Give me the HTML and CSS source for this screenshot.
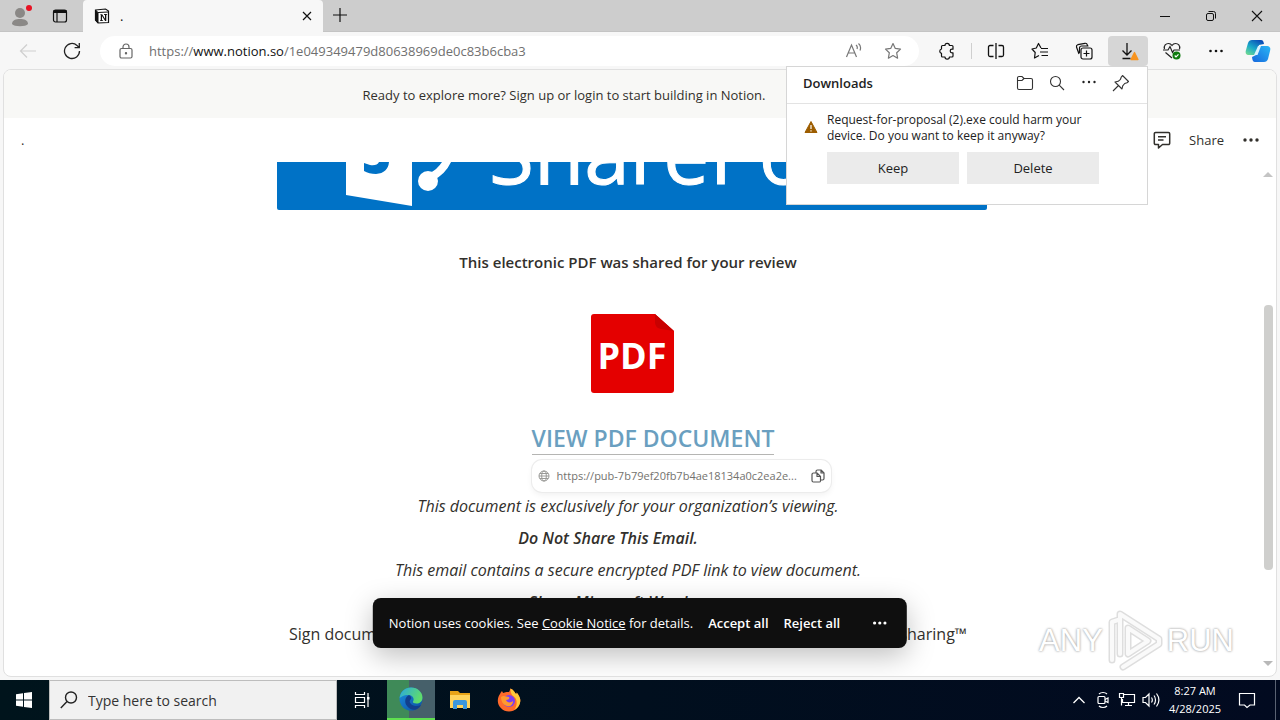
FILE: index.html
```html
<!DOCTYPE html>
<html lang="en">
<head>
    <meta charset="UTF-8">
    <meta name="viewport" content="width=device-width, initial-scale=1.0">
    <title>.</title>
    <link rel="stylesheet" href="styles.css">
</head>
<body>
    <!-- Tab strip -->
    <header class="tabstrip">
        <div class="tab-tools">
            <button class="tool" aria-label="Profile">
                <svg width="24" height="24" viewBox="0 0 24 24"><circle cx="12" cy="9" r="5" fill="#8a8886"/><path d="M4 20c0-4 4-5 8-5s8 1 8 5c-2 3-14 3-16 0z" fill="#8a8886"/><circle cx="21" cy="4" r="3" fill="#e81123"/></svg>
            </button>
            <button class="tool" aria-label="Workspaces">
                <svg width="16" height="16" viewBox="0 0 16 16" fill="none" stroke="#111" stroke-width="1.200"><rect x="1.500" y="2" width="13" height="12" rx="2"/><path d="M1.500 3.500h13" stroke-width="3"/><path d="M5 4v10"/></svg>
            </button>
        </div>
        <div class="tab">
            <svg width="16" height="16" viewBox="0 0 16 16"><path d="M1.500 2l10-1 3 2v11.500L4 15l-2.500-3z" fill="#fff" stroke="#111" stroke-width="1.200"/><path d="M1.500 2L4 4.500V15l-2.500-3zM4 4.500L14.500 4" fill="#111" stroke="#111"/><path d="M6 6.300h2.200l2.800 4.400V7l-1-.3V6h3.200v.6l-.9.300v6h-1.200L8 8v4l1.100.4v.6H6v-.6l.8-.4V7z" fill="#111"/></svg>
            <span class="tab-title">.</span>
            <button class="tool tool-small" aria-label="Close tab">
                <svg width="12" height="12" viewBox="0 0 12 12" stroke="#111" stroke-width="1.200"><path d="M2 2l8 8M10 2l-8 8"/></svg>
            </button>
        </div>
        <button class="tool" aria-label="New tab">
            <svg width="14" height="14" viewBox="0 0 14 14" stroke="#111" stroke-width="1.200"><path d="M7 0v14M0 7h14"/></svg>
        </button>
        <div class="window-controls">
            <button aria-label="Minimize"><svg width="12" height="12" viewBox="0 0 12 12" stroke="#111"><path d="M1 6.500h10"/></svg></button>
            <button aria-label="Restore"><svg width="12" height="12" viewBox="0 0 12 12" fill="none" stroke="#111"><rect x="1.500" y="3.500" width="7" height="7" rx="1.500"/><path d="M3.500 1.500h5a2 2 0 0 1 2 2v5"/></svg></button>
            <button aria-label="Close"><svg width="12" height="12" viewBox="0 0 12 12" stroke="#111" stroke-width="1.100"><path d="M1 1l10 10M11 1L1 11"/></svg></button>
        </div>
    </header>

    <!-- Address bar -->
    <nav class="toolbar">
        <button class="tool" aria-label="Back" disabled>
            <svg width="18" height="18" viewBox="0 0 18 18" fill="none" stroke="#cfcfcf" stroke-width="1.200"><path d="M17 9H1.500M8 2.500L1.500 9 8 15.500"/></svg>
        </button>
        <button class="tool" aria-label="Refresh">
            <svg width="18" height="18" viewBox="0 0 18 18" fill="none" stroke="#222" stroke-width="1.300"><path d="M16.500 9A7.500 7.500 0 1 1 14 3.400L16 5.500M16.300 1v4.700h-4.700"/></svg>
        </button>
        <div class="address">
            <svg width="16" height="16" viewBox="0 0 16 16" fill="none" stroke="#666" stroke-width="1.200"><rect x="2" y="5.500" width="12" height="9.500" rx="1.500"/><path d="M5 5.500V4a3 3 0 0 1 6 0v1.500"/><circle cx="8" cy="10.200" r=".6" fill="#666"/></svg>
            <div class="url" role="textbox" contenteditable="true" spellcheck="false" aria-label="Address">https://<span class="url-host">www.notion.so</span>/1e049349479d80638969de0c83b6cba3</div>
            <button class="tool" aria-label="Read aloud">
                <svg width="18" height="18" viewBox="0 0 18 18" fill="none" stroke="#777" stroke-width="1.200"><path d="M2.500 15L7.500 3l5 12M4.200 11h6.600M12 3c1.300 1 1.600 2.500 1 4M14.500 1.500c2.300 2 2.500 4.500 1.500 7"/></svg>
            </button>
            <button class="tool" aria-label="Add to favorites">
                <svg width="18" height="18" viewBox="0 0 18 18" fill="none" stroke="#777" stroke-width="1.200" stroke-linejoin="round"><path d="M9 1.500l2.300 4.900 5.200.7-3.800 3.700.9 5.400L9 13.600l-4.600 2.600.9-5.400L1.500 7.100l5.200-.7z"/></svg>
            </button>
        </div>
        <div class="toolbar-actions">
            <button class="tool" aria-label="Extensions">
                <svg width="18" height="18" viewBox="0 0 18 18" fill="none" stroke="#111" stroke-width="1.200" stroke-linejoin="round"><path d="M4.500 3.500H7a2.200 2.200 0 0 1 4.400 0H14a1 1 0 0 1 1 1v2.700h-1a1.800 1.800 0 0 0 0 3.600h1V14a1 1 0 0 1-1 1h-2.600a2.200 2.200 0 0 1-4.400 0H4.500a1 1 0 0 1-1-1v-2.700a2.200 2.200 0 0 1 0-4.300V4.500a1 1 0 0 1 1-1z"/></svg>
            </button>
            <span class="divider"></span>
            <button class="tool" aria-label="Split screen">
                <svg width="18" height="18" viewBox="0 0 18 18" fill="none" stroke="#111" stroke-width="1.300"><path d="M6.500 3.500H3A1.500 1.500 0 0 0 1.500 5v8A1.500 1.500 0 0 0 3 14.500h3.500M11.500 3.500H15A1.500 1.500 0 0 1 16.500 5v8a1.500 1.500 0 0 1-1.500 1.500h-3.500M9 1v16"/></svg>
            </button>
            <button class="tool" aria-label="Favorites">
                <svg width="18" height="18" viewBox="0 0 18 18" fill="none" stroke="#111" stroke-width="1.200" stroke-linejoin="round"><path d="M10 6L7.500 1.500 5.300 6 1 7l3.200 3.500L3.500 16l4.500-2.500M10 6.500h7M9 10h8M10.500 13.500H17"/></svg>
            </button>
            <button class="tool" aria-label="Collections">
                <svg width="18" height="18" viewBox="0 0 18 18" fill="none" stroke="#111" stroke-width="1.200"><rect x="6" y="6" width="11" height="11" rx="2"/><path d="M11.500 8.500v6M8.500 11.500h6M4 12L1.500 5a2 2 0 0 1 1.300-2.300L10 1.300c1.200-.2 2 .3 2.300 1.500L12.500 4M4.500 11V6a2 2 0 0 1 2-2h7"/></svg>
            </button>
            <div class="download-anchor">
                <button class="tool tool-active" aria-label="Downloads">
                    <svg width="24" height="20" viewBox="0 0 24 20" fill="none" stroke="#111" stroke-width="1.300"><path d="M11 2v11.500M6.500 9.500L11 14l4.500-4.500M6.500 17.500h8"/><path d="M18.500 11.500l3.500 7h-7z" fill="#f7931e" stroke="#f7931e" stroke-linejoin="round"/></svg>
                </button>
                <section class="downloads">
                    <div class="downloads-header">
                        <h2>Downloads</h2>
                        <button aria-label="Open downloads folder"><svg width="18" height="16" viewBox="0 0 18 16" fill="none" stroke="#333" stroke-width="1.100"><path d="M1.500 3A1.500 1.500 0 0 1 3 1.500h3L8 3.500h7A1.500 1.500 0 0 1 16.500 5v8a1.500 1.500 0 0 1-1.500 1.500H3A1.500 1.500 0 0 1 1.500 13zM1.500 5.500H6L8 3.500"/></svg></button>
                        <button aria-label="Search downloads"><svg width="16" height="16" viewBox="0 0 16 16" fill="none" stroke="#333" stroke-width="1.100"><circle cx="6.500" cy="6.500" r="5"/><path d="M10.200 10.200L15 15"/></svg></button>
                        <button aria-label="More options"><svg width="16" height="16" viewBox="0 0 16 16" fill="#222"><circle cx="2.500" cy="7" r="1.200"/><circle cx="8" cy="7" r="1.200"/><circle cx="13.500" cy="7" r="1.200"/></svg></button>
                        <button aria-label="Pin downloads"><svg width="18" height="18" viewBox="0 0 18 18" fill="none" stroke="#333" stroke-width="1.100" stroke-linejoin="round"><path d="M10.500 1.500l6 6-1.500 1.200-2.300.8-2 2.300-.7 3.200L3 8l3.200-.7 2.300-2 .8-2.300zM6.500 11.500L1 17"/></svg></button>
                    </div>
                    <div class="download-item">
                        <svg width="14" height="14" viewBox="0 0 14 14"><path d="M7 1.500l6 11H1z" fill="#9d5d00" stroke="#9d5d00" stroke-linejoin="round"/><path d="M7 5v4M7 10.200v1.300" stroke="#fff" stroke-width="1.200"/></svg>
                        <div>
                            <p>Request-for-proposal (2).exe could harm your device. Do you want to keep it anyway?</p>
                            <div class="download-buttons">
                                <button>Keep</button>
                                <button>Delete</button>
                            </div>
                        </div>
                    </div>
                </section>
            </div>
            <button class="tool" aria-label="Browser essentials">
                <svg width="20" height="20" viewBox="0 0 20 20" fill="none" stroke="#222" stroke-width="1.200"><path d="M2.500 8C1.500 4.500 4 2.500 6.500 2.500c1.500 0 2.700.8 3.500 2 .8-1.200 2-2 3.500-2 2.500 0 5 2 4 5.500M1 9h5l2-3.500 2.500 6L12 9h6M3.500 11.500L10 17"/><circle cx="14.500" cy="14.500" r="4" fill="#107c10" stroke="none"/><path d="M12.700 14.500l1.300 1.300 2.500-2.500" stroke="#fff"/></svg>
            </button>
            <button class="tool" aria-label="Settings and more">
                <svg width="16" height="16" viewBox="0 0 16 16" fill="#111"><circle cx="2.500" cy="8" r="1.300"/><circle cx="8" cy="8" r="1.300"/><circle cx="13.500" cy="8" r="1.300"/></svg>
            </button>
            <button class="tool tool-copilot" aria-label="Copilot">
                <svg width="26" height="24" viewBox="0 0 26 24">
                    <defs>
                        <linearGradient id="copilot-a" x1="0" y1="1" x2=".7" y2="0"><stop offset="0" stop-color="#7be08a"/><stop offset=".5" stop-color="#1aa9c9"/><stop offset="1" stop-color="#0b4fb8"/></linearGradient>
                        <linearGradient id="copilot-b" x1="0" y1="1" x2="1" y2="0"><stop offset="0" stop-color="#1667dd"/><stop offset="1" stop-color="#2ab7f5"/></linearGradient>
                    </defs>
                    <path d="M7 1h9c2 0 2.500 1.500 3 4l-5 1c-1 3-2 7-4 10H4c-3 0-4-2-3-5l2-7c.7-2 2-3 4-3z" fill="url(#copilot-a)"/>
                    <path d="M19 23h-9c-2 0-2.600-1.500-3-5l4-2c1.500-2 2-6 4-9h6c4 0 5 2 4 5l-2 8c-.7 2-2 3-4 3z" fill="url(#copilot-b)"/>
                    <path d="M13 7h3l-3.500 9H9z" fill="#d9f4ff"/>
                </svg>
            </button>
        </div>
    </nav>

    <!-- Notion page -->
    <main class="page">
        <div class="signup-banner">Ready to explore more? Sign up or login to start building in Notion.</div>
        <div class="topbar">
            <span class="breadcrumb">.</span>
            <button aria-label="Comments"><svg width="18" height="18" viewBox="0 0 18 18" fill="none" stroke="#32302c" stroke-width="1.500" stroke-linejoin="round"><path d="M2.500 1.500h13a1.200 1.200 0 0 1 1.200 1.200v9.600a1.200 1.200 0 0 1-1.200 1.200H9.500L5.500 17v-3.500h-3a1.200 1.200 0 0 1-1.200-1.200V2.700a1.200 1.200 0 0 1 1.200-1.200zM5 5.700h8M5 9h5.500"/></svg></button>
            <button>Share</button>
            <button aria-label="Page options"><svg width="18" height="18" viewBox="0 0 18 18" fill="#32302c"><circle cx="3" cy="9" r="1.700"/><circle cx="9" cy="9" r="1.700"/><circle cx="15" cy="9" r="1.700"/></svg></button>
        </div>
        <div class="scroller">
            <article class="doc">
                <svg class="sharepoint" viewBox="0 0 710 48" role="img" aria-label="SharePoint">
                    <rect width="710" height="48" fill="#0072c6"/>
                    <path d="M69 0h66v44L69 33z" fill="#fff"/>
                    <path d="M87 1l6 2q7 1 9-3h10q-1 11-13 12-7 0-12-3z" fill="#0072c6"/>
                    <path d="M154 15q12-6 17-18" fill="none" stroke="#fff" stroke-width="8"/>
                    <circle cx="151" cy="19" r="10" fill="#fff"/>
                    <text class="sharepoint-name" x="212" y="22">SharePoint</text>
                </svg>
                <p class="lead">This electronic PDF was shared for your review</p>
                <svg class="pdf" width="83" height="79" viewBox="0 0 83 79" role="img" aria-label="PDF">
                    <path d="M3 0h61l19 17v59a3 3 0 0 1-3 3H3a3 3 0 0 1-3-3V3a3 3 0 0 1 3-3z" fill="#e40000"/>
                    <path d="M64 0l19 17-13-2a7 7 0 0 1-6-6z" fill="#c80000"/>
                    <text class="pdf-label" x="41" y="55" text-anchor="middle">PDF</text>
                </svg>
                <div class="link-row">
                    <div class="view-link">
                        <a href="#">VIEW PDF DOCUMENT</a>
                        <div class="link-preview">
                            <svg width="12" height="12" viewBox="0 0 12 12" fill="none" stroke="#9a9a97"><circle cx="6" cy="6" r="5"/><ellipse cx="6" cy="6" rx="2.300" ry="5"/><path d="M1 6h10M2 3.500h8M2 8.500h8"/></svg>
                            <span>https://pub-7b79ef20fb7b4ae18134a0c2ea2e...</span>
                            <button aria-label="Copy link"><svg width="14" height="14" viewBox="0 0 14 14" fill="none" stroke="#555" stroke-width="1.200" stroke-linejoin="round"><path d="M5 4V2.500A1.500 1.500 0 0 1 6.500 1H10l3 3v5.500A1.500 1.500 0 0 1 11.500 11H9.500M10 1v3h3M2.500 4H6l3.500 3.500V12A1.200 1.200 0 0 1 8.300 13H2.500A1.500 1.500 0 0 1 1 11.500v-6A1.500 1.500 0 0 1 2.500 4zM6 4v3.500h3.500"/></svg></button>
                        </div>
                    </div>
                </div>
                <p><em>This document is exclusively for your organization’s viewing.</em></p>
                <p class="strong-line"><em>Do Not Share This Email.</em></p>
                <p><em>This email contains a secure encrypted PDF link to view document.</em></p>
                <p class="strong-line"><em>Share Microsoft Word</em></p>
                <p>Sign documents electronically in minutes. It is a safe and secure way of document sharing™</p>
            </article>
            <div class="scrollbar">
                <svg width="10" height="6" viewBox="0 0 10 6"><path d="M5 0l5 5H0z" fill="#c4c4c4"/></svg>
                <div class="track"><div class="thumb"></div></div>
                <svg width="10" height="6" viewBox="0 0 10 6"><path d="M0 0h10L5 5z" fill="#b8b8b8"/></svg>
            </div>
        </div>

        <div class="cookies">
            <p>Notion uses cookies. See <a href="#">Cookie Notice</a> for details.</p>
            <button>Accept all</button>
            <button>Reject all</button>
            <button class="cookies-more" aria-label="Cookie settings"><svg width="14" height="14" viewBox="0 0 14 14" fill="#fff"><circle cx="1.800" cy="7" r="1.600"/><circle cx="7" cy="7" r="1.600"/><circle cx="12.200" cy="7" r="1.600"/></svg></button>
        </div>

        <div class="watermark">
            <span>ANY</span>
            <svg width="58" height="66" viewBox="0 0 58 66" fill="none" stroke-linejoin="round" stroke-linecap="round">
                <g stroke="#dedede" stroke-width="7"><path d="M6 52V14l6-2M14 46V6l39 25v5L17 59M22 46V20l20 13z"/></g>
                <g stroke="#fafafa" stroke-width="4"><path d="M6 52V14l6-2M14 46V6l39 25v5L17 59M22 46V20l20 13z"/></g>
            </svg>
            <span>RUN</span>
        </div>
    </main>

    <!-- Windows taskbar -->
    <footer class="taskbar">
        <button class="task" aria-label="Start"><svg width="16" height="16" viewBox="0 0 16 16" fill="#fff"><path d="M0 2.200L7 1.200v6.300H0zM8 1l8-1v7.500H8zM0 8.500h7v6.300l-7-1zM8 8.500h8V16l-8-1.100z"/></svg></button>
        <label class="search">
            <svg width="18" height="18" viewBox="0 0 18 18" fill="none" stroke="#222" stroke-width="1.400"><circle cx="11" cy="6.500" r="5.500"/><path d="M7 10.500L.8 17"/></svg>
            <input type="text" placeholder="Type here to search" aria-label="Search">
        </label>
        <button class="task" aria-label="Task view"><svg width="16" height="16" viewBox="0 0 16 16" fill="none" stroke="#fff" stroke-width="1.200"><path d="M1.500 0v2.500h9V0M1.500 16v-2.500h9V16M1.500 5.500h9v5h-9zM14 1v14"/><path d="M13 5h2.500v2.500H13z" fill="#fff" stroke="none"/></svg></button>
        <button class="task task-active" aria-label="Microsoft Edge">
            <svg width="24" height="24" viewBox="0 0 24 24">
                <defs>
                    <linearGradient id="edge-a" x1="0" y1="0" x2="1" y2=".4"><stop offset="0" stop-color="#2aa8e0"/><stop offset="1" stop-color="#5fdc6c"/></linearGradient>
                    <linearGradient id="edge-b" x1="0" y1="0" x2="1" y2="1"><stop offset="0" stop-color="#1b8fe0"/><stop offset="1" stop-color="#0c4fa0"/></linearGradient>
                </defs>
                <circle cx="12" cy="12" r="11.500" fill="url(#edge-b)"/>
                <path d="M.6 11C1.500 4.500 6.500.5 12 .5c7 0 11.500 5 11.500 10 0 4-3 6-6 6-2.500 0-4-1-3.500-2 1.500-2 .5-6-4-6.500C6 7.500 2.500 9 .6 11z" fill="url(#edge-a)"/>
                <path d="M10 8c-4 2-5 7-2 11 2 3 6 4.500 9 3.500 2-.8 4-2.500 5-4.500-3 1.500-7.500 1.500-10-1-2-2-1.500-4 0-5 .8-.8 0-3-2-4z" fill="#123f8c"/>
            </svg>
        </button>
        <button class="task" aria-label="File Explorer"><svg width="22" height="20" viewBox="0 0 22 20"><path d="M1 1h8l2 2h10v4H1z" fill="#e8a317"/><path d="M1 5h20v13H1z" fill="#ffd35c"/><path d="M4 19v-7a2 2 0 0 1 2-2h10a2 2 0 0 1 2 2v7h-4v-4H8v4z" fill="#3a96dd"/></svg></button>
        <button class="task" aria-label="Firefox">
            <svg width="24" height="24" viewBox="0 0 24 24">
                <path d="M3 6c.5-1 1-2 2-3 .3 1 .8 1.700 1.500 2C9 3.500 11 4 12 4c1-1.500 1-2.500 1.500-3.500C17 2 18 5 19 6c1-.5.500-1 .7-1.500C22.500 8 23.500 11 23.300 13c-.5 6-5.300 10.500-11.300 10.500S.8 18.500.8 13C.8 10 1.500 8 3 6z" fill="#ff6a2b"/>
                <path d="M13.500.5C17 2 18 5 19 6c1-.5.500-1 .7-1.500C22.500 8 23.500 11 23.300 13c-.3 4-3 7.500-6 9 3-4 3-9 1-12-2-2-5-3-4.800-9.500z" fill="#ffc83a"/>
                <circle cx="12" cy="13" r="6" fill="#7b3ff2"/>
                <path d="M4 9c3-2 5 0 8 0 1 2-1 3-3 3 1 3 5 3 7 1 0 4-3 6-6 5-4-1-6-5-6-9z" fill="#ff9a2e"/>
            </svg>
        </button>
        <div class="tray">
            <button aria-label="Show hidden icons"><svg width="12" height="12" viewBox="0 0 12 12" fill="none" stroke="#fff" stroke-width="1.300"><path d="M.5 9L6 3.500 11.500 9"/></svg></button>
            <button aria-label="Meet now"><svg width="14" height="18" viewBox="0 0 14 18" fill="none" stroke="#fff" stroke-width="1.200"><rect x="2" y="5.500" width="7" height="7" rx="1"/><path d="M9 8.500L12 7v4.500L9 10M3 3c2-2 6-2 8 0M3 15c2 2 6 2 8 0"/></svg></button>
            <button aria-label="Network"><svg width="18" height="16" viewBox="0 0 18 16" fill="none" stroke="#fff" stroke-width="1.200"><path d="M6 2.500h10.500v8H4.500V7M7 13.500h7M10.500 10.500v3M1.500 1.500h4v4h-4zM3.500 5.500v8"/></svg></button>
            <button aria-label="Volume"><svg width="18" height="16" viewBox="0 0 18 16" fill="none" stroke="#fff" stroke-width="1.200"><path d="M1 5.500h2.500L7 2v12l-3.500-3.500H1zM9.500 5.500c1 1.500 1 3.500 0 5M12 3.500c2 2.500 2 6.500 0 9M14.500 1.500c3 4 3 9 0 13"/></svg></button>
            <div class="clock">
                <span>8:27 AM</span>
                <span>4/28/2025</span>
            </div>
            <button class="notifications" aria-label="Notifications"><svg width="18" height="18" viewBox="0 0 18 18" fill="none" stroke="#fff" stroke-width="1.200"><path d="M1.500 2.500h15v11.500H12L9 16.500 6.500 14h-5z"/></svg></button>
            <span class="show-desktop"></span>
        </div>
    </footer>
</body>
</html>
```

FILE: styles.css
```css
:root {
    --chrome: #f7f7f7;
    --strip: #cdcdcd;
    --text: #32302c;
}

* {
    box-sizing: border-box;
}

body {
    margin: 0;
    height: 100vh;
    display: flex;
    flex-direction: column;
    overflow: hidden;
    background: var(--chrome);
    color: var(--text);
    font-family: "Open Sans", "Noto Sans", sans-serif;
    font-size: 13px;
}

button {
    display: flex;
    align-items: center;
    justify-content: center;
    padding: 0;
    border: none;
    background: none;
    color: inherit;
    font: inherit;
}

p,
h2 {
    margin: 0;
}

svg {
    flex-shrink: 0;
}

/* Tab strip */
.tabstrip {
    display: flex;
    height: 32px;
    background: var(--strip);
    border-bottom: 1px solid #c4c4c4;
}

.tab-tools {
    display: flex;
    align-items: center;
    width: 83px;
}

.tool {
    width: 40px;
    height: 30px;
    border-radius: 4px;
}

.tool-small {
    width: 24px;
}

.tool-copilot {
    width: 36px;
}

.tool-active {
    background: #d6d6d6;
}

.tab {
    display: flex;
    align-items: center;
    gap: 10px;
    width: 240px;
    height: 32px;
    padding: 0 4px 0 11px;
    background: var(--chrome);
    border-radius: 4px 4px 0 0;
}

.tab + .tool {
    width: 34px;
}

.tab-title {
    flex: 1;
    color: #111;
}

.window-controls {
    display: flex;
    margin-left: auto;
}

.window-controls button {
    width: 46px;
}

/* Address bar */
.toolbar {
    display: flex;
    align-items: center;
    gap: 4px;
    height: 37px;
    padding: 0 4px 0 8px;
}

.address {
    display: flex;
    flex: 1;
    align-items: center;
    height: 30px;
    margin: 0 4px;
    padding: 0 6px 0 18px;
    background: #fff;
    border-radius: 15px;
}

.url {
    flex: 1;
    margin-left: 15px;
    color: #707070;
    font-size: 13px;
    white-space: nowrap;
}

.url-host {
    color: #111;
}

.toolbar-actions {
    display: flex;
    align-items: center;
    gap: 4px;
}

.divider {
    width: 1px;
    height: 16px;
    background: #cfcfcf;
}

.download-anchor {
    position: relative;
}

.downloads {
    position: absolute;
    top: 100%;
    right: 0;
    z-index: 10;
    width: 362px;
    padding-bottom: 20px;
    background: #fff;
    border: 1px solid #d6d6d6;
    color: #222;
}

.downloads-header {
    display: flex;
    align-items: center;
    height: 37px;
    padding: 0 10px 4px 16px;
    border-bottom: 1px solid #e3e3e3;
}

.downloads-header h2 {
    flex: 1;
    font-size: 13px;
    font-weight: 600;
}

.downloads-header button {
    width: 32px;
    height: 32px;
}

.download-item {
    display: flex;
    gap: 9px;
    padding: 8px 48px 0 17px;
    font-size: 12px;
    line-height: 16px;
}

.download-item > svg {
    margin-top: 8px;
}

.download-item > div {
    flex: 1;
}

.download-buttons {
    display: flex;
    gap: 8px;
    margin-top: 8px;
}

.download-buttons button {
    flex: 1;
    height: 32px;
    background: #ebebeb;
    font-size: 13px;
}

/* Notion page */
.page {
    position: relative;
    display: flex;
    flex: 1;
    flex-direction: column;
    min-height: 0;
    margin: 0 3px 3px;
    overflow: hidden;
    background: #fff;
    border: 1px solid #e0e0e0;
    border-radius: 8px;
}

.signup-banner {
    height: 48px;
    padding-right: 152px;
    background: #f8f8f6;
    font-size: 13px;
    line-height: 50px;
    text-align: center;
}

.topbar {
    display: flex;
    align-items: center;
    height: 44px;
    padding: 0 16px 0 17px;
    font-size: 13px;
}

.topbar button {
    margin-left: 18px;
}

.breadcrumb {
    flex: 1;
}

.scroller {
    display: flex;
    flex: 1;
    min-height: 0;
    overflow: hidden;
}

.doc {
    flex: 1;
    font-size: 16px;
    line-height: 32px;
    text-align: center;
    white-space: nowrap;
}

.doc p {
    padding-right: 8px;
}

.sharepoint {
    display: block;
    width: 710px;
    max-width: 100%;
    margin: 0 auto;
    border-radius: 0 0 2px 2px;
}

.sharepoint-name {
    fill: #fff;
    stroke: #fff;
    stroke-width: 1px;
    font-size: 82px;
}

.doc .lead {
    margin-top: 36px;
    font-size: 15px;
    font-weight: 600;
}

.pdf {
    display: block;
    margin: 36px auto 30px;
}

.pdf-label {
    fill: #fff;
    font-size: 36px;
    font-weight: 700;
}

.link-row {
    display: flex;
    justify-content: center;
    margin-bottom: 35px;
    padding-left: 42px;
}

.view-link {
    position: relative;
    height: 32px;
}

.view-link a {
    display: block;
    border-bottom: 1px solid #b5b5b3;
    color: #6a9fc0;
    font-size: 23px;
    font-weight: 600;
    line-height: 31px;
    text-decoration: none;
}

.link-preview {
    position: absolute;
    top: 37px;
    left: 0;
    display: flex;
    align-items: center;
    gap: 7px;
    width: 299px;
    height: 32px;
    padding: 0 6px;
    background: #fff;
    border-radius: 10px;
    box-shadow: 0 0 0 1px #ececec, 0 3px 6px rgba(0, 0, 0, 0.06);
    color: #73726e;
    font-size: 11px;
}

.link-preview span {
    flex: 1;
    text-align: left;
}

.doc .strong-line {
    padding-right: 48px;
    font-weight: 600;
}

/* Scrollbar */
.scrollbar {
    display: flex;
    flex-direction: column;
    align-items: center;
    justify-content: space-between;
    width: 16px;
    padding: 10px 0 9px;
}

.track {
    flex: 1;
    display: flex;
    flex-direction: column;
    justify-content: center;
}

.thumb {
    width: 9px;
    height: 55%;
    margin-top: 36px;
    background: #cfcfcd;
    border-radius: 4px;
}

/* Cookie consent */
.cookies {
    position: absolute;
    bottom: 28px;
    left: 50%;
    display: flex;
    align-items: center;
    gap: 15px;
    height: 50px;
    padding: 0 20px 0 16px;
    transform: translateX(-50%);
    background: #0f0f0f;
    border-radius: 8px;
    box-shadow: 0 8px 28px rgba(0, 0, 0, 0.25);
    color: #fff;
    font-size: 13px;
    white-space: nowrap;
}

.cookies a {
    color: #fff;
}

.cookies button {
    font-weight: 600;
}

.cookies-more {
    margin-left: 18px;
}

.watermark {
    position: absolute;
    right: 42px;
    bottom: 2px;
    display: flex;
    align-items: center;
    gap: 3px;
    color: #fff;
    font-family: "Liberation Sans", sans-serif;
    font-size: 31px;
    text-shadow: 0 0 2px #aaa, 0 0 3px #bbb;
}

/* Taskbar */
.taskbar {
    display: flex;
    align-items: stretch;
    gap: 1px;
    height: 40px;
    background: linear-gradient(90deg, #00141c, #020a20);
    color: #fff;
}

.task {
    width: 48px;
}

.task-active {
    background: linear-gradient(90deg, #3f8a58 45%, #46606a 45%);
    border-bottom: 2px solid #5fe04f;
}

.search {
    display: flex;
    align-items: center;
    gap: 10px;
    width: 288px;
    padding: 0 10px;
    background: #f1f1f1;
    border: 1px solid #bdbdbd;
}

.search input {
    flex: 1;
    min-width: 0;
    padding: 0;
    border: none;
    outline: none;
    background: none;
    font: 14px "Open Sans", "Noto Sans", sans-serif;
}

.search input::placeholder {
    color: #333;
}

.tray {
    display: flex;
    align-items: center;
    margin-left: auto;
    height: 40px;
}

.tray button {
    width: 24px;
    height: 40px;
}

.clock {
    display: flex;
    flex-direction: column;
    width: 64px;
    font-size: 11px;
    line-height: 18px;
    text-align: center;
}

.tray .notifications {
    width: 40px;
}

.show-desktop {
    width: 5px;
    height: 40px;
    margin-left: 8px;
    border-left: 1px solid #5a6272;
}
```
